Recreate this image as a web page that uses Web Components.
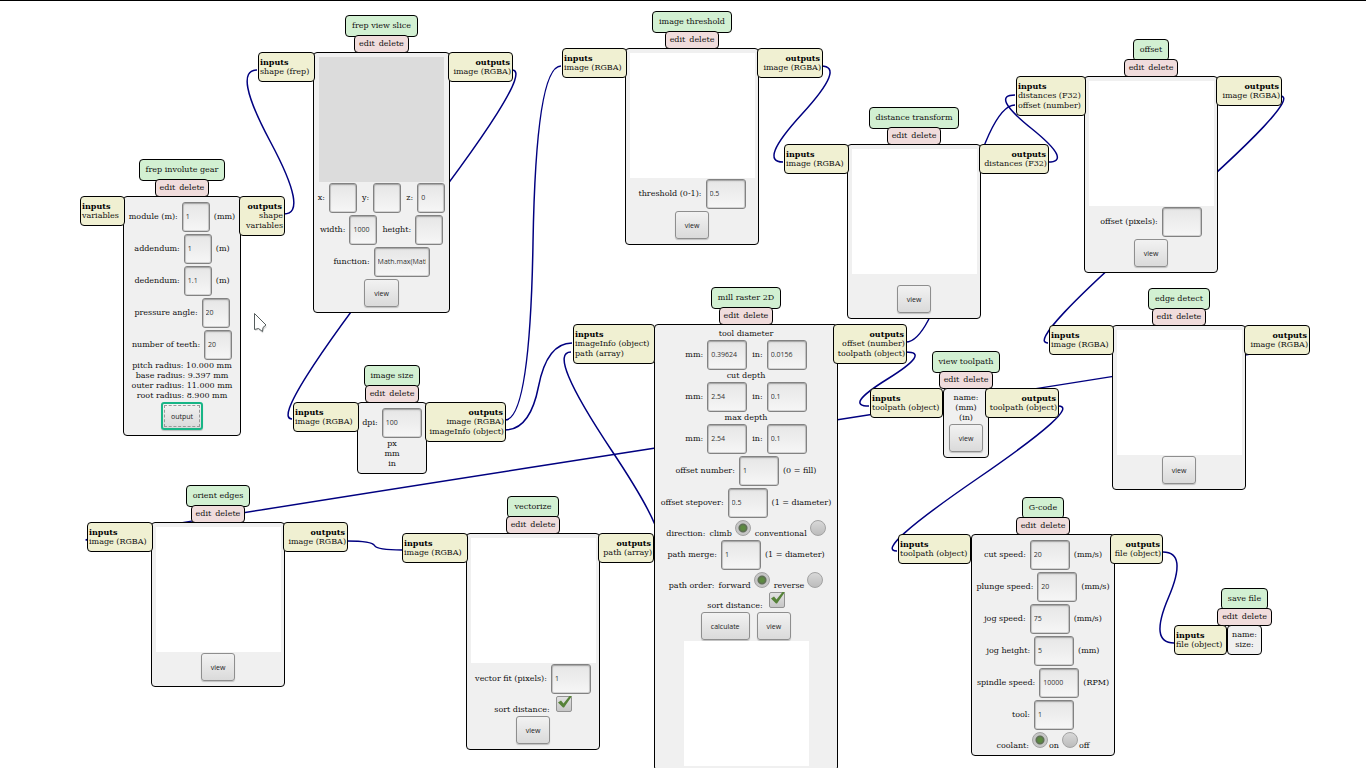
<!DOCTYPE html>
<html lang="en">
<head>
<meta charset="utf-8">
<title>mods</title>
<style>
html,body{margin:0;height:100%;overflow:hidden;background:#fff}
</style>
</head>
<body>
<mod-canvas>
<mod-node name="frep involute gear" inputs="variables" outputs="shape|variables" style="--x:80px;--y:159px;--in:45px;--body:118px;--out:46px">
  <mod-row><mod-field label="module (m):" value="1" unit="(mm)" size="s"></mod-field></mod-row>
  <mod-row><mod-field label="addendum:" value="1" unit="(m)" size="s"></mod-field></mod-row>
  <mod-row><mod-field label="dedendum:" value="1.1" unit="(m)" size="s"></mod-field></mod-row>
  <mod-row><mod-field label="pressure angle:" value="20" size="s"></mod-field></mod-row>
  <mod-row><mod-field label="number of teeth:" value="20" size="s"></mod-field></mod-row>
  <mod-text>pitch radius: 10.000 mm</mod-text>
  <mod-text>base radius: 9.397 mm</mod-text>
  <mod-text>outer radius: 11.000 mm</mod-text>
  <mod-text>root radius: 8.900 mm</mod-text>
  <mod-row><mod-button focused>output</mod-button></mod-row>
</mod-node>
<mod-node name="frep view slice" inputs="shape (frep)" outputs="image (RGBA)" style="--x:258px;--y:15px;--in:57px;--body:137px;--out:65px">
  <mod-view filled></mod-view>
  <mod-row><mod-field label="x:" size="s"></mod-field><mod-field label="y:" size="s"></mod-field><mod-field label="z:" value="0" size="s"></mod-field></mod-row>
  <mod-row><mod-field label="width:" value="1000" size="s"></mod-field><mod-field label="height:" size="s"></mod-field></mod-row>
  <mod-row><mod-field label="function:" value="Math.max(Math.max(" size="l"></mod-field></mod-row>
  <mod-row><mod-button>view</mod-button></mod-row>
</mod-node>
<mod-node name="image size" inputs="image (RGBA)" outputs="image (RGBA)|imageInfo (object)" style="--x:293px;--y:365px;--in:66px;--body:70px;--out:81px">
  <mod-row><mod-field label="dpi:" value="100"></mod-field></mod-row>
  <mod-text>px</mod-text><mod-text>mm</mod-text><mod-text>in</mod-text>
</mod-node>
<mod-node name="image threshold" inputs="image (RGBA)" outputs="image (RGBA)" style="--x:562px;--y:11px;--in:65px;--body:134px;--out:66px">
  <mod-view></mod-view>
  <mod-row><mod-field label="threshold (0-1):" value="0.5"></mod-field></mod-row>
  <mod-row><mod-button>view</mod-button></mod-row>
</mod-node>
<mod-node name="distance transform" inputs="image (RGBA)" outputs="distances (F32)" style="--x:784px;--y:107px;--in:65px;--body:134px;--out:70px">
  <mod-view></mod-view><mod-text></mod-text>
  <mod-row><mod-button>view</mod-button></mod-row>
</mod-node>
<mod-node name="offset" inputs="distances (F32)|offset (number)" outputs="image (RGBA)" style="--x:1016px;--y:39px;--in:70px;--body:134px;--out:66px">
  <mod-view></mod-view>
  <mod-row><mod-field label="offset (pixels):"></mod-field></mod-row>
  <mod-row><mod-button>view</mod-button></mod-row>
</mod-node>
<mod-node name="edge detect" inputs="image (RGBA)" outputs="image (RGBA)" style="--x:1049px;--y:288px;--in:65px;--body:134px;--out:66px">
  <mod-view></mod-view>
  <mod-row><mod-button>view</mod-button></mod-row>
</mod-node>
<mod-node name="orient edges" inputs="image (RGBA)" outputs="image (RGBA)" style="--x:87px;--y:485px;--in:66px;--body:134px;--out:65px">
  <mod-view></mod-view>
  <mod-row><mod-button>view</mod-button></mod-row>
</mod-node>
<mod-node name="vectorize" inputs="image (RGBA)" outputs="path (array)" style="--x:402px;--y:496px;--in:66px;--body:134px;--out:56px">
  <mod-view></mod-view>
  <mod-row><mod-field label="vector fit (pixels):" value="1"></mod-field></mod-row>
  <mod-row low><mod-check label="sort distance:" checked></mod-check></mod-row>
  <mod-row><mod-button>view</mod-button></mod-row>
</mod-node>
<mod-node name="mill raster 2D" inputs="imageInfo (object)|path (array)" outputs="offset (number)|toolpath (object)" style="--x:573px;--y:287px;--in:82px;--body:184px;--out:74px;--lap-in:1px;--lap-out:5px">
  <mod-text>tool diameter</mod-text>
  <mod-row><mod-field label="mm:" value="0.39624"></mod-field><mod-field label="in:" value="0.0156"></mod-field></mod-row>
  <mod-text>cut depth</mod-text>
  <mod-row><mod-field label="mm:" value="2.54"></mod-field><mod-field label="in:" value="0.1"></mod-field></mod-row>
  <mod-text>max depth</mod-text>
  <mod-row><mod-field label="mm:" value="2.54"></mod-field><mod-field label="in:" value="0.1"></mod-field></mod-row>
  <mod-row><mod-field label="offset number:" value="1" unit="(0 = fill)"></mod-field></mod-row>
  <mod-row><mod-field label="offset stepover:" value="0.5" unit="(1 = diameter)"></mod-field></mod-row>
  <mod-row low><mod-choice caption="direction:" options="climb|conventional"></mod-choice></mod-row>
  <mod-row><mod-field label="path merge:" value="1" unit="(1 = diameter)"></mod-field></mod-row>
  <mod-row low><mod-choice caption="path order:" options="forward|reverse"></mod-choice></mod-row>
  <mod-row low><mod-check label="sort distance:" checked></mod-check></mod-row>
  <mod-row><mod-button>calculate</mod-button><mod-button>view</mod-button></mod-row>
  <mod-view></mod-view>
</mod-node>
<mod-node name="view toolpath" inputs="toolpath (object)" outputs="toolpath (object)" style="--x:870px;--y:351px;--in:73px;--body:46px;--out:74px;--lap-in:0px;--lap-out:4px">
  <mod-text>name:</mod-text><mod-text>(mm)</mod-text><mod-text>(in)</mod-text>
  <mod-row><mod-button>view</mod-button></mod-row>
</mod-node>
<mod-node name="G-code" inputs="toolpath (object)" outputs="file (object)" style="--x:898px;--y:497px;--in:73px;--body:144px;--out:53px;--lap-in:0px;--lap-out:5px">
  <mod-row><mod-field label="cut speed:" value="20" unit="(mm/s)"></mod-field></mod-row>
  <mod-row><mod-field label="plunge speed:" value="20" unit="(mm/s)"></mod-field></mod-row>
  <mod-row><mod-field label="jog speed:" value="75" unit="(mm/s)"></mod-field></mod-row>
  <mod-row><mod-field label="jog height:" value="5" unit="(mm)"></mod-field></mod-row>
  <mod-row><mod-field label="spindle speed:" value="10000" unit="(RPM)"></mod-field></mod-row>
  <mod-row><mod-field label="tool:" value="1"></mod-field></mod-row>
  <mod-row low><mod-choice caption="coolant:" options="on|off" after></mod-choice></mod-row>
</mod-node>
<mod-node name="save file" inputs="file (object)" style="--x:1174px;--y:588px;--in:53px;--body:35px;--lap-in:0px">
  <mod-text>name:</mod-text><mod-text>size:</mod-text>
</mod-node>
</mod-canvas>
<script>
const esc = s => (s || '').replace(/&/g, '&amp;').replace(/"/g, '&quot;').replace(/</g, '&lt;');
class Base extends HTMLElement {
  constructor() { super(); this.attachShadow({mode: 'open'}); }
  connectedCallback() { this.shadowRoot.innerHTML = this.view(n => esc(this.getAttribute(n))); }
}

// Each link runs from an output port to an input port: x0, y0, x1, y1.
const LINKS = [
  [284,214,257,70], [512,70,292,419], [505,420,561,66], [505,430,572,343],
  [821,66,783,162], [1048,162,1015,95], [906,342,1015,105], [906,352,869,406],
  [1280,96,1048,343], [1308,343,87,540], [347,541,402,550], [653,550,571,352],
  [1058,406,897,551], [1163,552,1174,643]
];
const path = ([a, b, c, d]) => `<path d="M${a} ${b}Q${a + 25} ${b} ${(a + c) / 2} ${(b + d) / 2}T${c} ${d}"/>`;

customElements.define('mod-canvas', class extends Base {
  view() { return `<style>
    :host{display:block;position:relative;height:100vh;overflow:hidden;box-sizing:border-box;border-top:1px solid #000;background:#fff;
      font:8px/10px "DejaVu Serif",serif;color:#111}
    svg{position:absolute;left:0;top:-1px;overflow:visible;pointer-events:none}
    .links{fill:none;stroke:#000080;stroke-width:1.5}
    .pointer{left:254px;top:311px}
    </style>
    <svg class="links" width="1" height="1" aria-hidden="true">${LINKS.map(path).join('')}</svg>
    <slot></slot>
    <svg class="pointer" width="14" height="22" aria-hidden="true">
      <path d="M1 2V18L4.5 17 9 20.500 10 16.500 13 14Z" fill="#0002" transform="translate(0 1)"/>
      <path d="M.5 1.500V17.500L4.500 16.500 8.500 19.500 9 15.500 12 13Z" fill="#fff" stroke="#555d5d"/></svg>`; }
});

customElements.define('mod-node', class extends Base {
  view(a) {
    const ports = (n) => this.hasAttribute(n) ? `<div class="port ${n}"><b>${n}</b>${a(n).split('|').map(p => `<span>${p}</span>`).join('')}</div>` : '';
    return `<style>
    :host{position:absolute;left:var(--x);top:calc(var(--y) - 1px);display:grid;align-items:start;
      grid-template-columns:calc(var(--in) - var(--lap-in,2px)) var(--body) auto;white-space:nowrap}
    .cap{grid-column:2;justify-self:center;display:flex;flex-direction:column;align-items:center;margin-bottom:-1px}
    .title,.tools,.port,.body{box-sizing:border-box;border:1px solid #000;border-radius:4px}
    .title{height:22px;padding:5px 6px;background:#d2f0d2}
    .tools{height:18px;margin-top:-2px;padding:3px 4px;background:#f0dcdc;position:relative;display:flex;gap:4px}
    button{all:unset;cursor:pointer}
    .port{display:flex;flex-direction:column;background:#f0f0d2;padding:4px 1px;grid-row:2;position:relative;z-index:1}
    .inputs{width:var(--in);grid-column:1}
    .outputs{width:var(--out);grid-column:3;text-align:right;margin-left:calc(0px - var(--lap-out,2px));align-items:flex-end}
    .outputs b{padding-right:1px}
    b{color:#000}
    .body{grid-column:2;grid-row:2;background:#f0f0f0;padding:4px 0;display:flex;flex-direction:column;align-items:center;position:relative}
    </style>
    <div class="cap"><div class="title">${a('name')}</div>
      <div class="tools"><button>edit</button><button>delete</button></div></div>
    ${ports('inputs')}<div class="body"><slot></slot></div>${ports('outputs')}`; }
});

customElements.define('mod-row', class extends Base {
  view() { return `<style>:host{display:flex;gap:5px;justify-content:center;align-items:center}
    :host([low]){height:20px}</style><slot></slot>`; }
});

customElements.define('mod-text', class extends Base {
  view() { return `<style>:host{display:block;height:10px}</style><slot></slot>`; }
});

customElements.define('mod-view', class extends Base {
  view() { return `<style>:host{display:block;width:125px;height:125px;background:#fff}
    :host([filled]){background:#dcdcdc}</style>`; }
});

customElements.define('mod-field', class extends Base {
  view(a) { return `<style>
    :host{display:flex;align-items:center;gap:4px;height:32px}
    label{display:flex;align-items:center;gap:4px}
    input{box-sizing:border-box;width:40px;height:30px;margin:0 0 1px;padding:0 3px;border:1px solid #828282;border-radius:3px;outline:0;
      background:linear-gradient(#e6e6e6,#f6f6f6);box-shadow:inset 0 0 0 1px #0002,inset 0 1px 2px #0003;
      font:7px "Open Sans","Noto Sans",sans-serif;color:#333}
    :host([size=s]) input{width:28px}
    :host([size=l]) input{width:56px}
    </style><label><span>${a('label')}</span><input type="text" value="${a('value')}"></label>${a('unit') ? `<span>${a('unit')}</span>` : ''}`; }
});

customElements.define('mod-button', class extends Base {
  view() { return `<style>
    :host{display:flex;align-items:center;height:30px;padding:0 1px}
    button{height:28px;margin:0;padding:0 9px;border:1px solid #8e8e8e;border-radius:3px;
      background:linear-gradient(#f2f2f2,#dadada);box-shadow:0 1px 1px #0003;
      font:7px "Open Sans","Noto Sans",sans-serif;color:#222}
    :host([focused]) button{border:2px solid #18b586;outline:1px dashed #999;outline-offset:-4px;padding:0 8px}
    </style><button type="button"><slot></slot></button>`; }
});

customElements.define('mod-check', class extends Base {
  view() { return `<style>
    label{display:flex;gap:6px;height:20px;align-items:flex-end}
    .box{position:relative;display:block;width:16px;height:16px;padding:0 0 3px}
    input{appearance:none;box-sizing:border-box;display:block;margin:0;width:16px;height:16px;border:1px solid #929292;border-radius:2px;
      background:linear-gradient(#e2e2e2,#c6c6c6)}
    svg{position:absolute;left:0;top:-1px;pointer-events:none;display:none}
    input:checked + svg{display:block}
    </style><label><span>${this.getAttribute('label')}</span><i class="box"><input type="checkbox" ${this.hasAttribute('checked') ? 'checked' : ''}>
    <svg width="17" height="14" aria-hidden="true"><path d="M2 7.500L5 5.500 7.500 8.500 13.500 1H16L8 12.500H7Z" fill="#568238"/></svg></i></label>`; }
});

let groups = 0;
customElements.define('mod-choice', class extends Base {
  view(a) {
    const g = 'choice' + groups++;
    return `<style>
    :host,div{display:flex;gap:4px;height:20px;align-items:flex-end}
    label{display:flex;gap:3px;align-items:flex-end}
    :host([after]),:host([after]) div{gap:3px}
    :host([after]) label{flex-direction:row-reverse;gap:1px}
    input{appearance:none;box-sizing:border-box;margin:0 0 3px;width:16px;height:16px;border-radius:50%;border:1px solid #a2a2a2;
      background:linear-gradient(#d8d8d8,#bcbcbc)}
    input:checked{background:radial-gradient(circle,#5c8a40 0 2px,#5f6b58 4px,#c6c6c6 5px)}
    </style><div role="radiogroup" aria-label="${a('caption')}"><span>${a('caption')}</span>${a('options').split('|').map((o, i) =>
      `<label><span>${o}</span><input type="radio" name="${g}" ${i ? '' : 'checked'}></label>`).join('')}</div>`; }
});
</script>
</body>
</html>
